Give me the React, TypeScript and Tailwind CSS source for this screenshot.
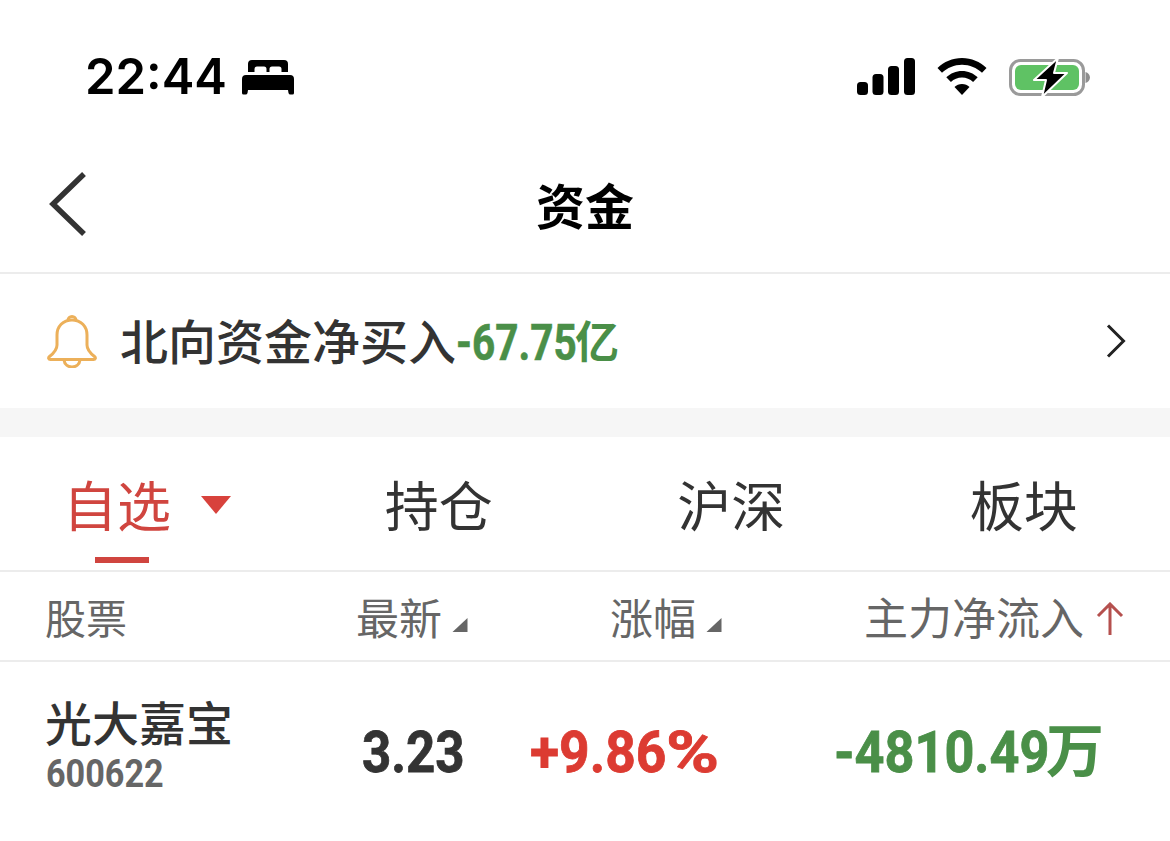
const cjk = "font-['Inter','Noto_Sans_CJK_SC',sans-serif]";
const num = "font-['Roboto','Noto_Sans_CJK_SC',sans-serif]";

function BedIcon() {
  return (
    <svg width="52" height="36" viewBox="0 0 52 36" fill="black">
      <path d="M6 13V5a4 4 0 0 1 4-4h32a4 4 0 0 1 4 4v8h-6.500V10a2.500 2.500 0 0 0-2.500-2.500h-7a2.500 2.500 0 0 0-2.500 2.500v3h-3V10a2.500 2.500 0 0 0-2.500-2.500h-7A2.500 2.500 0 0 0 12.500 10v3z" />
      <path d="M4 16h44a4 4 0 0 1 4 4v14a1.500 1.500 0 0 1-1.500 1.500h-2a2 2 0 0 1-2-1.500l-.5-3H6l-.5 3a2 2 0 0 1-2 1.500h-2A1.500 1.500 0 0 1 0 34V20a4 4 0 0 1 4-4z" />
    </svg>
  );
}

function SignalIcon() {
  return (
    <svg width="58" height="38" viewBox="0 0 58 38" fill="black">
      <rect x="0" y="24" width="11" height="13" rx="3.500" />
      <rect x="15.500" y="16" width="11" height="21" rx="3.500" />
      <rect x="31" y="8" width="11" height="29" rx="3.500" />
      <rect x="47" y="0" width="11" height="37" rx="3.500" />
    </svg>
  );
}

function WifiIcon() {
  return (
    <svg width="50" height="38" viewBox="0 0 50 38" fill="black">
      <path d="M25 0C15.500 0 7 3.700.500 10l4.500 4.800C10.300 9.700 17.300 6.700 25 6.700s14.700 3 20 8.100L49.500 10C43 3.700 34.500 0 25 0z" />
      <path d="M25 13c-6 0-11.500 2.400-15.700 6.300l4.600 4.800c3-2.800 6.900-4.500 11.100-4.500s8.100 1.700 11.100 4.500l4.600-4.800C36.500 15.400 31 13 25 13z" />
      <path d="M25 26c-3 0-5.500 1.100-7.500 2.900L25 37l7.500-8.100C30.500 27.100 28 26 25 26z" />
    </svg>
  );
}

function BatteryIcon() {
  return (
    <svg width="82" height="42" viewBox="0 0 82 42">
      <rect x="1.500" y="4.500" width="73" height="34" rx="10" fill="none" stroke="#9a9a9a" strokeWidth="3" />
      <rect x="6" y="9" width="64" height="25" rx="6" fill="#5fc264" />
      <path d="M76.500 16v11c2.500-.8 4.500-3 4.500-5.500s-2-4.700-4.500-5.500z" fill="#8e8e8e" />
      <path d="M49 2 25 24h12l-4 17 25-24H45z" fill="black" stroke="white" strokeWidth="2" strokeLinejoin="round" />
    </svg>
  );
}

function BellIcon() {
  return (
    <svg width="50" height="54" viewBox="0 0 50 54" fill="none" stroke="#ecb05a" strokeWidth="3" strokeLinejoin="round" strokeLinecap="round">
      <path d="M21 6.500a4 4 0 0 1 8 0" />
      <path d="M25 6c-9 0-15 6.500-15 15v10c0 4.500-3 8-7.500 11.500c-1.500 1.200-1 3 1 3h43c2 0 2.500-1.800 1-3C43 39 40 35.500 40 31V21C40 12.500 34 6 25 6z" />
      <path d="M17 46c.5 4.500 4 7 8 7s7.500-2.500 8-7" />
    </svg>
  );
}

function Sort() {
  return (
    <svg width="16" height="16" viewBox="0 0 16 16" className="ml-2.5 mt-3" fill="#666666">
      <path d="M15.500 1v14H.500z" />
    </svg>
  );
}

export default function App() {
  return (
    <div className={`${cjk} flex h-[841px] w-[1170px] flex-col overflow-hidden bg-white`}>
      <div className="flex h-[140px] items-center justify-between pl-[85px] pr-[79px] pt-[14px]">
        <div className="flex items-center gap-[15px]">
          <span className="text-[49px] font-semibold leading-none text-black">22:44</span>
          <BedIcon />
        </div>
        <div className="flex items-center gap-[22px]">
          <SignalIcon />
          <WifiIcon />
          <BatteryIcon />
        </div>
      </div>

      <div className="relative flex h-[134px] items-center justify-center border-b-2 border-[#ececec] pt-[4px]">
        <svg width="40" height="64" viewBox="0 0 40 64" className="absolute left-[48px] top-[32px]" fill="none" stroke="#333333" strokeWidth="5.500">
          <path d="M36 2 5 32l31 30" />
        </svg>
        <span className="text-[49px] font-bold leading-none text-black">资金</span>
      </div>

      <div className="flex h-[134px] items-center justify-between pl-[47px] pr-[44px]">
        <div className="flex items-center">
          <BellIcon />
          <span className="ml-[23px] mt-[4px] text-[48px] font-medium leading-none text-[#333333]">北向资金净买入</span>
          <span className={`${num} mt-[4px] flex items-center text-[#4a8f48]`}>
            <span className="inline-block w-[119px] origin-left scale-x-[0.81] whitespace-nowrap text-[50px] font-bold leading-none [-webkit-text-stroke:0.6px]">-67.75</span>
            <span className="text-[44px] font-bold leading-none">亿</span>
          </span>
        </div>
        <svg width="20" height="34" viewBox="0 0 20 34" fill="none" stroke="#222222" strokeWidth="3">
          <path d="M2 1.500 17.500 17 2 32.500" />
        </svg>
      </div>

      <div className="h-[30px] bg-[#f6f6f6]" />

      <div className="grid h-[135px] grid-cols-4 border-b-2 border-[#ececec] text-[54px] leading-none text-[#333333]">
        <div className="relative flex items-center pl-[63px] pt-[8px] text-[#d0453f]">
          <span>自选</span>
          <svg width="30" height="18" viewBox="0 0 30 18" className="mb-[6px] ml-[30px]" fill="#d8423c">
            <path d="M0 0h30L15 18z" />
          </svg>
          <div className="absolute bottom-[7px] left-[95px] h-[6px] w-[54px] bg-[#d0453f]" />
        </div>
        <div className="flex items-center justify-center pt-[8px]">持仓</div>
        <div className="flex items-center justify-center pt-[8px]">沪深</div>
        <div className="flex items-center justify-center pt-[8px]">板块</div>
      </div>

      <div className="grid h-[90px] grid-cols-[263px_160px_254px_402px] items-center border-b-2 border-[#ececec] pl-[45px] pt-[6px] text-[43px] leading-none text-[#666666]">
        <div className="text-[41px]">股票</div>
        <div className="flex items-center justify-end">最新<Sort /></div>
        <div className="flex items-center justify-end">涨幅<Sort /></div>
        <div className="flex items-center justify-end text-[44px]">
          主力净流入
          <svg width="28" height="34" viewBox="0 0 28 34" className="ml-[12px]" fill="none" stroke="#b5504e" strokeWidth="3">
            <path d="M14 33V2M2 14 14 2l12 12" />
          </svg>
        </div>
      </div>

      <div className="grid h-[179px] grid-cols-[300px_117px_255px_386px] items-center pl-[46px]">
        <div className="-mt-[14px]">
          <div className="-ml-px text-[47px] font-medium leading-[58px] text-[#333333]">光大嘉宝</div>
          <div className={`${num} h-[42px] w-[117px] origin-left scale-x-[0.9] whitespace-nowrap text-[38px] font-bold leading-[42px] text-[#666666]`}>600622</div>
        </div>
        <div className={`${num} flex justify-end text-[58px] font-bold leading-none text-[#333333] [-webkit-text-stroke:0.8px]`}>
          <span className="w-[101px] origin-left scale-x-[0.88] whitespace-nowrap">3.23</span>
        </div>
        <div className={`${num} flex justify-end text-[58px] font-bold leading-none text-[#dc3b32] [-webkit-text-stroke:0.8px]`}>
          <span className="w-[136px] origin-left scale-x-[0.92] whitespace-nowrap">+9.86</span>
          <span className="w-[52px] origin-left scale-x-[1.24] whitespace-nowrap">%</span>
        </div>
        <div className={`${num} flex justify-end text-[#4a8f48]`}>
          <span className="w-[212px] origin-left scale-x-[0.9] whitespace-nowrap text-[58px] font-bold leading-none [-webkit-text-stroke:0.8px]">-4810.49</span>
          <span className="text-[58px] font-bold leading-none">万</span>
        </div>
      </div>
    </div>
  );
}
